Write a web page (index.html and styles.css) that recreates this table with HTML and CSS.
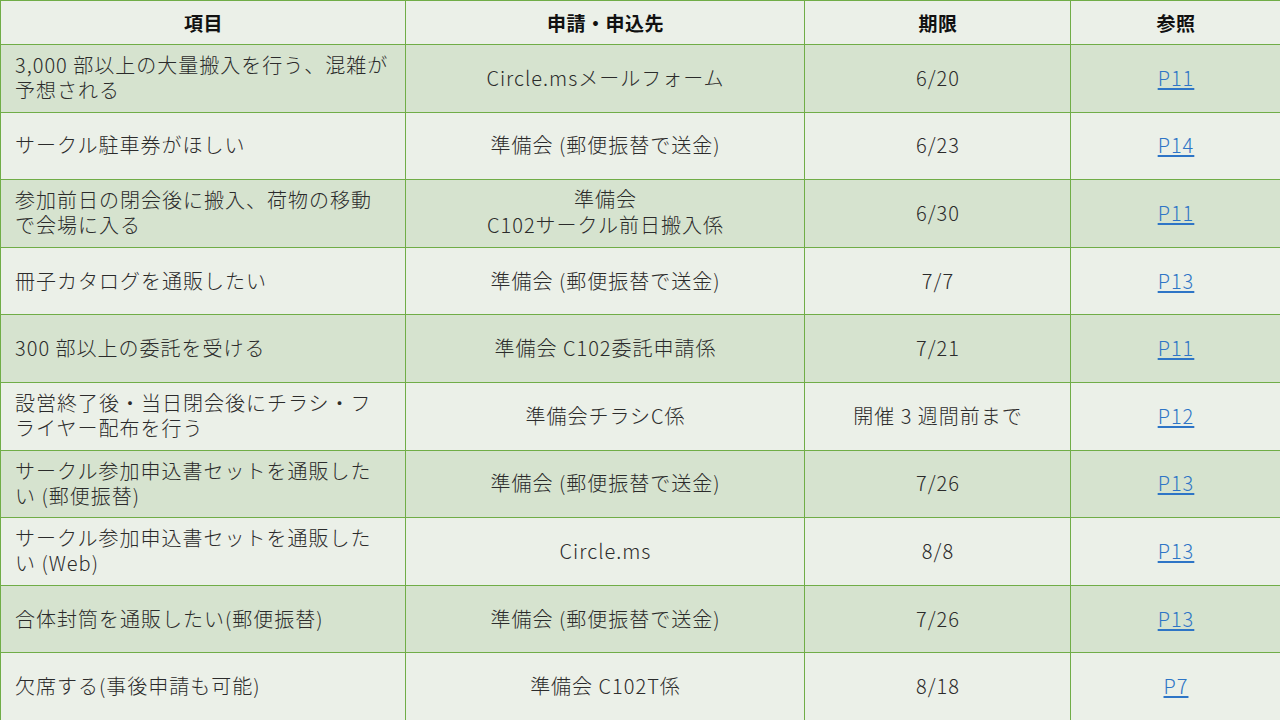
FILE: index.html
```html
<!DOCTYPE html>
<html lang="ja">
<head>
<meta charset="utf-8">
<link rel="stylesheet" href="styles.css">
</head>
<body>
<table class="sched">
<colgroup><col class="c1"><col class="c2"><col class="c3"><col class="c4"></colgroup>
<thead>
<tr><th>項目</th><th>申請・申込先</th><th>期限</th><th>参照</th></tr>
</thead>
<tbody>
<tr class="dark"><td class="item">3,000 部以上の大量搬入を行う、混雑が予想される</td><td>Circle.msメールフォーム</td><td>6/20</td><td><a href="#">P11</a></td></tr>
<tr><td class="item">サークル駐車券がほしい</td><td>準備会 (郵便振替で送金)</td><td>6/23</td><td><a href="#">P14</a></td></tr>
<tr class="dark"><td class="item">参加前日の閉会後に搬入、荷物の移動で会場に入る</td><td class="two">準備会
C102サークル前日搬入係</td><td>6/30</td><td><a href="#">P11</a></td></tr>
<tr><td class="item">冊子カタログを通販したい</td><td>準備会 (郵便振替で送金)</td><td>7/7</td><td><a href="#">P13</a></td></tr>
<tr class="dark"><td class="item">300 部以上の委託を受ける</td><td>準備会 C102委託申請係</td><td>7/21</td><td><a href="#">P11</a></td></tr>
<tr><td class="item">設営終了後・当日閉会後にチラシ・フライヤー配布を行う</td><td>準備会チラシC係</td><td>開催 3 週間前まで</td><td><a href="#">P12</a></td></tr>
<tr class="dark"><td class="item">サークル参加申込書セットを通販したい (郵便振替)</td><td>準備会 (郵便振替で送金)</td><td>7/26</td><td><a href="#">P13</a></td></tr>
<tr><td class="item">サークル参加申込書セットを通販したい (Web)</td><td>Circle.ms</td><td>8/8</td><td><a href="#">P13</a></td></tr>
<tr class="dark"><td class="item">合体封筒を通販したい(郵便振替)</td><td>準備会 (郵便振替で送金)</td><td>7/26</td><td><a href="#">P13</a></td></tr>
<tr><td class="item">欠席する(事後申請も可能)</td><td>準備会 C102T係</td><td>8/18</td><td><a href="#">P7</a></td></tr>
</tbody>
</table>
</body>
</html>
```

FILE: styles.css
```css
html, body {
  margin: 0;
  padding: 0;
  background: #ebf0e8;
}
body {
  width: 1280px;
  height: 720px;
  overflow: hidden;
  font-family: "Noto Sans CJK JP", "Noto Sans", sans-serif;
  color: #2b2b2b;
}
.sched {
  width: 1280px;
  height: 720px;
  border-collapse: collapse;
  table-layout: fixed;
}
.c1 { width: 405px; }
.c2 { width: 399px; }
.c3 { width: 266px; }
.c4 { width: 210px; }
.sched th, .sched td {
  border: 1px solid #70ad47;
  text-align: center;
  vertical-align: middle;
  font-size: 20px;
  letter-spacing: 1px;
  line-height: 25px;
  padding: 0 13px 2px 14px;
  font-weight: 300;
}
.sched td.two {
  line-height: 26px;
  white-space: pre-line;
}
.sched thead tr { height: 44px; }
.sched th {
  font-weight: 700;
  background: #ebf0e8;
  font-size: 19px;
  letter-spacing: 0.5px;
  color: #111;
  padding-bottom: 0;
}
.sched tbody tr { height: 67.6px; background: #ebf0e8; }
.sched tbody tr.dark { background: #d6e3cf; }
.sched tbody tr td { border-top-color: #8fc06f; }
.sched td.item { text-align: left; }
.sched a {
  color: #2e75c6;
  text-decoration: underline;
  text-underline-offset: 2px;
}
```
